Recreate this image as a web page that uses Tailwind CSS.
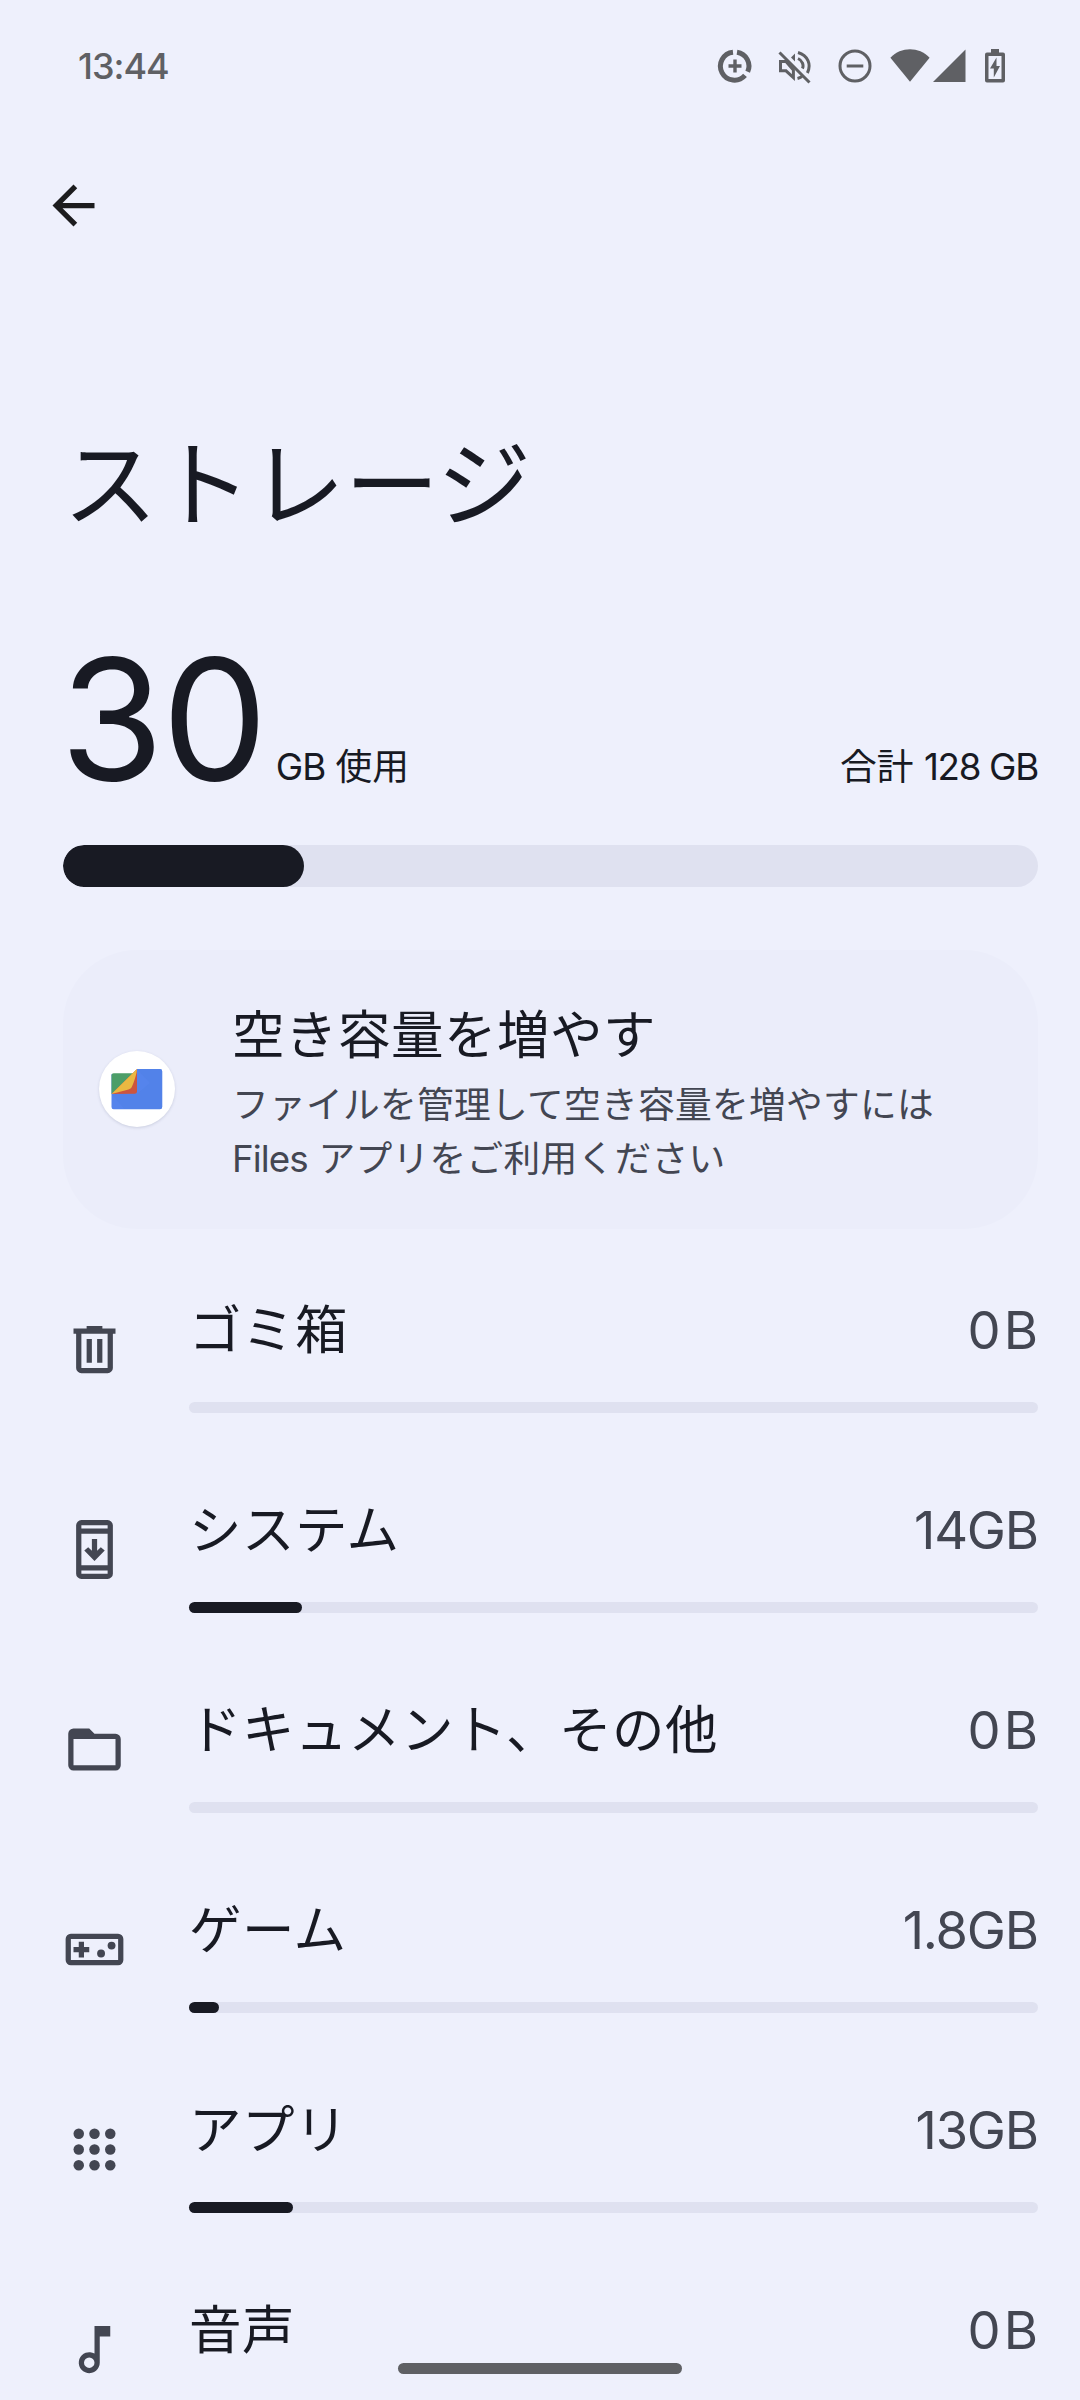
<!DOCTYPE html>
<html lang="ja">
<head>
<meta charset="utf-8">
<title>ストレージ</title>
<script src="https://cdn.jsdelivr.net/npm/@tailwindcss/browser@4"></script>
</head>
<body class="bg-[#eef0fc]">
<div class="relative flex h-[2400px] w-[1080px] flex-col overflow-hidden bg-[#eef0fc] font-['Inter','Noto_Sans_CJK_JP',sans-serif] text-[#181a23]">

  <header class="flex h-[132px] shrink-0 items-center pl-[78px] pr-[74px] text-[#5f6064]">
    <span class="text-[36px] font-medium leading-none tracking-[-1px]">13:44</span>
    <div class="ml-auto flex items-center">
      <svg class="h-[36px] w-[36px]" viewBox="0 0 36 36" fill="none" stroke="currentColor"><path d="M20 4.200A14 14 0 0 1 30.700 23.800M28 27.300A14 14 0 1 1 16 4.200" stroke-width="5"/><path d="M18 11.500v13M11.500 18h13" stroke-width="3.400"/></svg>
      <svg class="ml-[23px] h-[36px] w-[36px]" viewBox="0 0 36 36" fill="none" stroke="currentColor" stroke-width="3"><path d="M3 13.600h7l7.400 8.500v7.400L10 22.800H4.500v-9"/><path d="M19 5.500v8l-4-4z" fill="currentColor" stroke="none"/><path d="M22 4.500c10 3 13.500 12 9.400 20.500M22 10.500c4.500 2 6 7 4.400 10M21.500 30.500c2 -.5 3 -1 4.500 -2"/><path d="M3.500 4.500l30 30"/></svg>
      <svg class="ml-[25px] h-[36px] w-[36px]" viewBox="0 0 36 36" fill="none" stroke="currentColor" stroke-width="3"><circle cx="18" cy="18" r="15"/><path d="M9.700 18h16.600"/></svg>
      <svg class="ml-[17px] h-[36px] w-[40px]" viewBox="0 0 40 36" fill="currentColor"><path d="M.4 9.800C11-1.500 29-1.500 39.600 9.800L20 33.800z"/></svg>
      <svg class="ml-[3px] h-[36px] w-[33px]" viewBox="0 0 33 36" fill="currentColor"><path d="M32.500 1.500V34H0z"/></svg>
      <svg class="ml-[18px] h-[36px] w-[22px]" viewBox="0 0 22 36"><path d="M7 1h8v3.500h4a2 2 0 0 1 2 2V32.500a2 2 0 0 1-2 2H3a2 2 0 0 1-2-2V6.500a2 2 0 0 1 2-2h4zM4.500 8v23h13V8z" fill="currentColor" fill-rule="evenodd"/><path d="M12.500 9.500L6 20.500h3.800v9L16 18h-3.500z" fill="currentColor"/></svg>
    </div>
  </header>

  <nav class="flex h-[147px] shrink-0 items-center pl-[42px] text-[#1c1c1e]">
    <svg class="h-[63px] w-[63px]" viewBox="0 0 24 24" fill="currentColor"><path d="M20 11H7.830l5.590-5.590L12 4l-8 8 8 8 1.410-1.410L7.830 13H20z"/></svg>
  </nav>

  <main class="flex flex-col pl-[63px] pr-[42px]">
    <h1 class="mt-[136px] h-[140px] text-[94.5px] font-normal leading-[140px] tracking-[-0.6px]">ストレージ</h1>

    <section class="mt-[64px] flex h-[226px] items-baseline">
      <span class="-ml-[3px] text-[168px] leading-[200px] tracking-[-2px]">30</span>
      <span class="ml-[10px] text-[36.75px]"><span class="tracking-[-1px]">GB</span> 使用</span>
      <span class="ml-auto text-[36.75px]">合計 <span class="tracking-[-1.3px]">128 GB</span></span>
    </section>
    <div class="h-[42px] overflow-hidden rounded-full bg-[#dfe1f0]"><div class="h-full w-[241px] rounded-full bg-[#181a23]"></div></div>

    <section class="mt-[63px] flex h-[279px] items-center rounded-[74px] bg-[#ebedfa] pl-[36px]">
      <svg class="-mt-[1px] h-[76px] w-[76px] shrink-0 rounded-full bg-white shadow-[0_1px_3px_rgba(60,70,110,0.18)]" viewBox="0 0 76 76">
        <path d="M12.500 57v-34H38v-5H61a2.200 2.200 0 0 1 2.200 2.200V56a2.200 2.200 0 0 1-2.200 2.200H14.700a2.200 2.200 0 0 1-2.200-2.200z" fill="#5584ec"/>
        <path d="M38 18l13 14-13 11H12.500l13 15H61a2.200 2.200 0 0 0 2.200-2.200V20.200A2.200 2.200 0 0 0 61 18z" fill="#5080e6" opacity=".5"/>
        <path d="M12.500 43V24.500a2.200 2.200 0 0 1 2.200-2.200H35z" fill="#4c9e68"/>
        <path d="M38 18v22.500a2.200 2.200 0 0 1-2.200 2.200L12.500 43z" fill="#cc553e"/>
        <path d="M38 18c-.5 6-3 13-5 17.500-.8 1.800-2 2.500-3.500 3L12.500 43z" fill="#eab942"/>
      </svg>
      <div class="ml-[57px] flex flex-col pt-[4px]">
        <h2 class="h-[81px] text-[52.5px] font-normal leading-[76px] tracking-[0.5px]">空き容量を増やす</h2>
        <p class="text-[36.75px] leading-[54px] tracking-[0.25px] text-[#434652]">ファイルを管理して空き容量を増やすには<br><span class="tracking-[-0.9px]">Files</span> アプリをご利用ください</p>
      </div>
    </section>

    <ul class="mt-[58px] flex flex-col">
      <li class="flex h-[200px]">
        <svg class="mt-[31px] h-[63px] w-[63px] shrink-0 text-[#434652]" viewBox="0 0 24 24" fill="currentColor"><path fill-rule="evenodd" d="M9 3h6v1h5v2h-1v13a2 2 0 0 1-2 2H7a2 2 0 0 1-2-2V6H4V4h5zM7 6v13h10V6zM9 8h2v9H9zM13 8h2v9h-2z"/></svg>
        <div class="ml-[63px] flex-1">
          <div class="flex h-[115px] items-baseline justify-between pt-[1px] text-[52.5px] leading-[84px] tracking-[0.5px]"><span>ゴミ箱</span><span class="-mr-[3px] tracking-[3px] text-[#434652]">0B</span></div>
          <div class="h-[11px] rounded-full bg-[#dfe1f0]"></div>
        </div>
      </li>
      <li class="flex h-[200px]">
        <svg class="mt-[31px] h-[63px] w-[63px] shrink-0 text-[#434652]" viewBox="0 0 24 24" fill="currentColor"><path fill-rule="evenodd" d="M7 .8h10a2 2 0 0 1 2 2v18.400a2 2 0 0 1-2 2H7a2 2 0 0 1-2-2V2.800a2 2 0 0 1 2-2zM7 2.800v1.200h10V2.800zM7 6v12h10V6zM7 20v1.200h10V20z"/><path d="M11 8h2v4.500l1.400-1.400 1.500 1.300L12 16.400l-3.900-4 1.500-1.300 1.400 1.400z"/></svg>
        <div class="ml-[63px] flex-1">
          <div class="flex h-[115px] items-baseline justify-between pt-[1px] text-[52.5px] leading-[84px] tracking-[0.5px]"><span>システム</span><span class="tracking-[-1.200px] text-[#434652]">14GB</span></div>
          <div class="h-[11px] rounded-full bg-[#dfe1f0]"><div class="h-full w-[113px] rounded-full bg-[#181a23]"></div></div>
        </div>
      </li>
      <li class="flex h-[200px]">
        <svg class="mt-[31px] h-[63px] w-[63px] shrink-0 text-[#434652]" viewBox="0 0 24 24" fill="currentColor"><path fill-rule="evenodd" d="M4 4h6l2 2h8a2 2 0 0 1 2 2v10a2 2 0 0 1-2 2H4a2 2 0 0 1-2-2V6a2 2 0 0 1 2-2zM4 8v10h16V8z"/></svg>
        <div class="ml-[63px] flex-1">
          <div class="flex h-[115px] items-baseline justify-between pt-[1px] text-[52.5px] leading-[84px] tracking-[0.5px]"><span>ドキュメント、その他</span><span class="-mr-[3px] tracking-[3px] text-[#434652]">0B</span></div>
          <div class="h-[11px] rounded-full bg-[#dfe1f0]"></div>
        </div>
      </li>
      <li class="flex h-[200px]">
        <svg class="mt-[31px] h-[63px] w-[63px] shrink-0 text-[#434652]" viewBox="0 0 24 24" fill="currentColor"><path fill-rule="evenodd" d="M3 6h18a2 2 0 0 1 2 2v8a2 2 0 0 1-2 2H3a2 2 0 0 1-2-2V8a2 2 0 0 1 2-2zM3 8v8h18V8z"/><path d="M6 9h2v2h2v2H8v2H6v-2H4v-2h2z"/><circle cx="14.500" cy="13.500" r="1.500"/><circle cx="18.500" cy="10.500" r="1.500"/></svg>
        <div class="ml-[63px] flex-1">
          <div class="flex h-[115px] items-baseline justify-between pt-[1px] text-[52.5px] leading-[84px] tracking-[0.5px]"><span>ゲーム</span><span class="tracking-[-1.200px] text-[#434652]">1.8GB</span></div>
          <div class="h-[11px] rounded-full bg-[#dfe1f0]"><div class="h-full w-[30px] rounded-full bg-[#181a23]"></div></div>
        </div>
      </li>
      <li class="flex h-[200px]">
        <svg class="mt-[31px] h-[63px] w-[63px] shrink-0 text-[#434652]" viewBox="0 0 24 24" fill="currentColor"><circle cx="6" cy="6" r="2"/><circle cx="12" cy="6" r="2"/><circle cx="18" cy="6" r="2"/><circle cx="6" cy="12" r="2"/><circle cx="12" cy="12" r="2"/><circle cx="18" cy="12" r="2"/><circle cx="6" cy="18" r="2"/><circle cx="12" cy="18" r="2"/><circle cx="18" cy="18" r="2"/></svg>
        <div class="ml-[63px] flex-1">
          <div class="flex h-[115px] items-baseline justify-between pt-[1px] text-[52.5px] leading-[84px] tracking-[0.5px]"><span>アプリ</span><span class="tracking-[-1.200px] text-[#434652]">13GB</span></div>
          <div class="h-[11px] rounded-full bg-[#dfe1f0]"><div class="h-full w-[104px] rounded-full bg-[#181a23]"></div></div>
        </div>
      </li>
      <li class="flex h-[113px]">
        <svg class="mt-[31px] h-[63px] w-[63px] shrink-0 text-[#434652]" viewBox="0 0 24 24" fill="currentColor"><path fill-rule="evenodd" d="M12 3h6v4h-4v10a4 4 0 1 1-2-3.460zM10 15a2 2 0 1 0 0 4 2 2 0 0 0 0-4z"/></svg>
        <div class="ml-[63px] flex-1">
          <div class="flex h-[113px] items-baseline justify-between pt-[1px] text-[52.5px] leading-[84px] tracking-[0.5px]"><span>音声</span><span class="-mr-[3px] tracking-[3px] text-[#434652]">0B</span></div>
        </div>
      </li>
    </ul>
  </main>

  <div class="absolute left-[398px] top-[2363px] h-[11px] w-[284px] rounded-full bg-[#5f6064]"></div>
</div>
</body>
</html>
